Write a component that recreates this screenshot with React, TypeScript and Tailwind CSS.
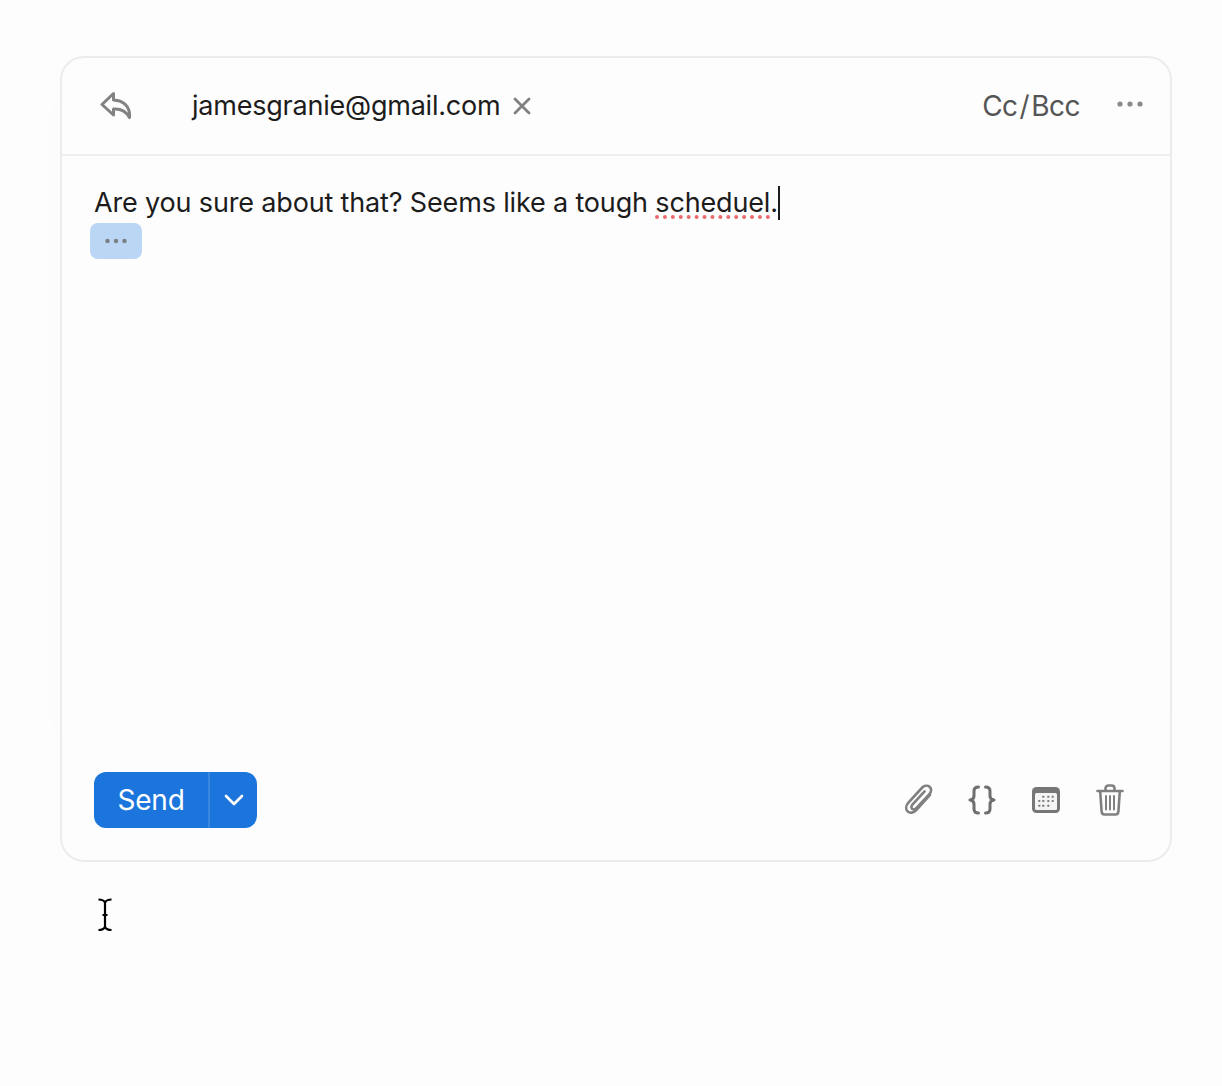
import React from "react";

const Dots = ({ color }: { color: string }) => (
  <svg width="26" height="6" viewBox="0 0 26 6" className="block">
    <circle cx="3" cy="3" r="2.6" fill={color} />
    <circle cx="13" cy="3" r="2.6" fill={color} />
    <circle cx="23" cy="3" r="2.6" fill={color} />
  </svg>
);

const ReplyAll = () => (
  <svg width="32" height="30" viewBox="0 0 32 30" fill="none" stroke="#828282" strokeWidth="3" strokeLinejoin="round" strokeLinecap="round">
    <path d="M13.5 2.5 L2 13.5 L13.5 24 L13.5 18 C19.5 17.6 25.5 19 29.5 26.5 C30.5 16 24 9.5 13.5 9 Z" />
  </svg>
);

const Clip = () => (
  <svg width="30" height="32" viewBox="0 0 30 32" fill="none" stroke="#808080" strokeWidth="2.6" strokeLinecap="round" strokeLinejoin="round" className="-mr-[2px]">
    <path d="M26 11 L12.5 26 C9.8 29 5.8 29.6 3.6 27.4 C1.4 25.2 1.8 21.6 4.4 18.6 L17.8 4 C20 1.6 23.4 1 25.6 2.8 C27.8 4.8 27.4 7.8 25.4 10 L12.6 24 C11.2 25.6 9.4 25.8 8.2 24.8 C7 23.8 7.2 22 8.6 20.4 L20.6 7.4" />
  </svg>
);

const Braces = () => (
  <svg width="28" height="30" viewBox="0 0 28 30" fill="none" stroke="#6f6f6f" strokeWidth="3" strokeLinecap="round" strokeLinejoin="round">
    <path d="M10.5 2 C7 2 6 3.5 6 6 V11 C6 13 5 14.5 2 15 C5 15.5 6 17 6 19 V24 C6 26.5 7 28 10.5 28" />
    <path d="M17.5 2 C21 2 22 3.5 22 6 V11 C22 13 23 14.5 26 15 C23 15.5 22 17 22 19 V24 C22 26.5 21 28 17.5 28" />
  </svg>
);

const Calendar = () => (
  <svg width="28" height="26" viewBox="0 0 28 26">
    <rect x="0" y="0" width="28" height="26" rx="4.5" fill="#767676" />
    <rect x="3" y="6" width="22" height="17" rx="1.5" fill="#f4f4f4" />
    {[
      [11.3, 9.7], [16.3, 9.7], [20.7, 9.7],
      [7.3, 14], [11.3, 14], [16.3, 14], [20.7, 14],
      [7.3, 18.7], [11.3, 18.7], [16.3, 18.7],
    ].map(([x, y]) => (
      <rect key={`${x}-${y}`} x={x - 1} y={y - 1} width="2" height="2" rx="0.5" fill="#7b7b7b" />
    ))}
  </svg>
);

const Trash = () => (
  <svg width="28" height="32" viewBox="0 0 28 32" fill="none" stroke="#808080" strokeWidth="2.6" strokeLinecap="round" strokeLinejoin="round">
    <path d="M1.5 7 H26.5" />
    <path d="M9.5 6.5 V4.5 C9.5 2.6 10.6 1.5 12.4 1.5 H15.6 C17.4 1.5 18.5 2.6 18.5 4.5 V6.5" />
    <path d="M4.2 7.5 L5.6 27.5 C5.7 29.5 6.9 30.5 8.6 30.5 H19.4 C21.1 30.5 22.3 29.5 22.4 27.5 L23.8 7.5" />
    <path d="M10 12 V25.5 M14 12 V25.5 M18 12 V25.5" strokeWidth="2" />
  </svg>
);

const Cursor = () => (
  <svg width="16" height="34" viewBox="0 0 16 34" fill="none" stroke="#000" strokeWidth="2.2">
    <path d="M1.5 1.5 C5 1.5 7 2.5 8 4.5 C9 2.5 11 1.5 14.5 1.5" />
    <path d="M1.5 32 C5 32 7 31 8 29 C9 31 11 32 14.5 32" />
    <path d="M8 4 V29 M5.5 17 H10.5" />
  </svg>
);

export default function App() {
  return (
    <div className="min-h-[1086px] bg-[#fdfdfd] px-[60px] pt-[56px] font-['Inter','Liberation_Sans',sans-serif] text-[#1c1c1c]">
      <div className="relative">
        <div className="pointer-events-none absolute inset-x-0 top-[40px] h-[644px] shadow-[0_0_30px_rgba(0,0,0,0.015)]" />
        <div className="relative flex h-[806px] w-[1112px] flex-col rounded-[24px] border-2 border-[#ececec] bg-[#fdfdfd]">
          <div className="flex h-[98px] shrink-0 items-center border-b-2 border-[#efefef] pl-[38px] pr-[27px]">
            <ReplyAll />
            <span className="ml-[60px] text-[27px] leading-[34px] tracking-[-0.22px]">jamesgranie@gmail.com</span>
            <svg width="18" height="18" viewBox="0 0 18 18" className="ml-[13px]" stroke="#808080" strokeWidth="2.8" strokeLinecap="round">
              <path d="M2 2 L16 16 M16 2 L2 16" />
            </svg>
            <span className="ml-auto text-[28px] leading-[34px] tracking-[-0.5px] text-[#555555]">
              Cc<span className="mx-[2px]">/</span>Bcc
            </span>
            <span className="ml-[37px] -translate-y-[2px]">
              <Dots color="#8a8a8a" />
            </span>
          </div>
          <div className="flex-1 pl-[28px] pt-[29px]">
            <div className="flex h-[36px] items-center whitespace-pre text-[27px] leading-[36px] tracking-[-0.16px]">
              <span className="pl-[4px]">Are you sure about that? Seems like a tough </span>
              <span className="underline decoration-[#ee6a70] decoration-dotted decoration-[4px] underline-offset-[3px]">scheduel</span>
              <span>.</span>
              <span className="h-[34px] w-[2px] bg-[#1c1c1c]" />
            </div>
            <div className="mt-[2px] flex h-[36px] w-[52px] items-center justify-center rounded-[8px] bg-[#bbd6f4]">
              <span className="scale-[0.85]">
                <Dots color="#7a7f85" />
              </span>
            </div>
          </div>
          <div className="flex h-[88px] shrink-0 items-start justify-between pb-[32px] pl-[32px] pr-[46px]">
            <div className="flex h-[56px] w-[163px] overflow-hidden rounded-[12px] bg-[#1c75dc] text-white">
              <div className="flex w-[116px] items-center justify-center border-r-2 border-[#3a87e0] text-[28px] tracking-[-0.2px]">Send</div>
              <div className="flex flex-1 items-center justify-center">
                <svg width="20" height="12" viewBox="0 0 20 12" fill="none" stroke="#fff" strokeWidth="2.6" strokeLinecap="round" strokeLinejoin="round">
                  <path d="M2 2 L10 10 L18 2" />
                </svg>
              </div>
            </div>
            <div className="flex h-[56px] items-center gap-[36px]">
              <Clip />
              <Braces />
              <Calendar />
              <Trash />
            </div>
          </div>
        </div>
      </div>
      <div className="ml-[37px] mt-[36px]">
        <Cursor />
      </div>
    </div>
  );
}
